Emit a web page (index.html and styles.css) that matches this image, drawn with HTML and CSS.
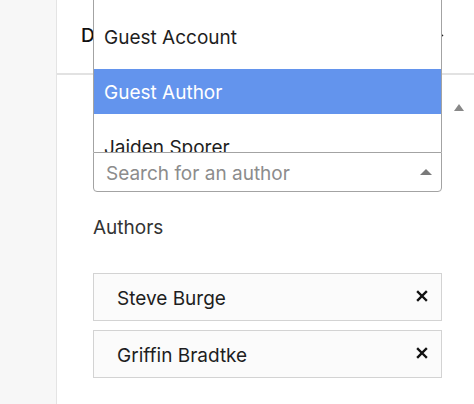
FILE: index.html
```html
<!DOCTYPE html>
<html>
<head>
<meta charset="utf-8">
<link rel="stylesheet" href="styles.css">
</head>
<body>
<div class="app">
  <aside class="sidebar"></aside>
  <main class="main">
    <div class="header">
      <span class="header-title">Document</span>
      <svg class="header-chevron" width="20" height="20" viewBox="0 0 20 20"><path d="M4 12 L10 7 L16 12" fill="none" stroke="#1e1e1e" stroke-width="1.6"/></svg>
    </div>
    <div class="panel">
      <div class="panel-head">
        <span class="toggle-tri"></span>
      </div>
      <div class="combo">
        <div class="menu">
          <ul class="menu-list">
            <li class="menu-item">Guest Account</li>
            <li class="menu-item is-active">Guest Author</li>
            <li class="menu-item">Jaiden Sporer</li>
            <li class="menu-item">Kris Bode</li>
          </ul>
        </div>
        <div class="search">
          <span class="search-placeholder">Search for an author</span>
          <span class="search-tri"></span>
        </div>
      </div>
      <div class="label">Authors</div>
      <div class="author-list">
        <div class="author"><span>Steve Burge</span><svg class="remove" width="12" height="12" viewBox="0 0 12 12"><path d="M2 2 L10 10 M10 2 L2 10" stroke="#111" stroke-width="2.4" stroke-linecap="square"/></svg></div>
        <div class="author"><span>Griffin Bradtke</span><svg class="remove" width="12" height="12" viewBox="0 0 12 12"><path d="M2 2 L10 10 M10 2 L2 10" stroke="#111" stroke-width="2.4" stroke-linecap="square"/></svg></div>
      </div>
    </div>
  </main>
</div>
</body>
</html>
```

FILE: styles.css
```css
* { box-sizing: border-box; }
html, body { margin: 0; padding: 0; }
body {
  font-family: Inter, "Noto Sans", "Liberation Sans", sans-serif;
  background: #fff;
  color: #1e1e1e;
  overflow: hidden;
}
.app {
  display: flex;
  width: 474px;
  height: 404px;
}
.sidebar {
  width: 57px;
  flex: none;
  background: #f7f7f7;
  border-right: 1px solid #e4e4e4;
}
.main {
  flex: 1;
  display: flex;
  flex-direction: column;
}
.header {
  height: 75px;
  border-bottom: 2px solid #e2e2e2;
  display: flex;
  align-items: center;
  padding: 0 27px 0 24px;
  justify-content: space-between;
}
.header-title {
  font-size: 19px;
  font-weight: 500;
  color: #111;
  margin-top: -2px;
}
.header-chevron { margin-top: -6px; }
.panel {
  padding: 0 32px 0 36px;
}
.panel-head {
  height: 65px;
  display: flex;
  align-items: center;
  justify-content: flex-end;
  margin-right: -22px;
}
.toggle-tri {
  width: 0; height: 0;
  border-left: 5px solid transparent;
  border-right: 5px solid transparent;
  border-bottom: 7px solid #888;
}
.combo {
  position: relative;
  margin-top: 12px;
}
.menu {
  position: absolute;
  left: 0; right: 0;
  bottom: 100%;
  height: 170px;
  overflow: hidden;
  background: #fff;
  border-left: 1px solid #a3a3a3;
  border-right: 1px solid #a3a3a3;
}
.menu-list {
  list-style: none;
  margin: 0;
  padding: 32px 0 0;
  display: flex;
  flex-direction: column;
  gap: 10px;
}
.menu-item {
  height: 45px;
  display: flex;
  align-items: center;
  padding: 1px 0 0 10px;
  font-size: 19px;
  color: #1e1e1e;
}
.menu-item.is-active {
  background: #6394ed;
  color: #fff;
}
.search {
  height: 40px;
  border: 1px solid #a3a3a3;
  border-radius: 0 0 4px 4px;
  display: flex;
  align-items: center;
  justify-content: space-between;
  padding: 2px 9px 0 12px;
  background: #fff;
}
.search-placeholder {
  font-size: 19px;
  color: #8c8c8c;
}
.search-tri {
  width: 0; height: 0;
  border-left: 6px solid transparent;
  border-right: 6px solid transparent;
  border-bottom: 6px solid #7a7a7a;
  margin-top: -2px;
}
.label {
  margin-top: 24px;
  font-size: 19px;
  line-height: 24px;
  color: #333;
}
.author-list {
  margin-top: 33px;
  display: flex;
  flex-direction: column;
  gap: 9px;
}
.author {
  height: 48px;
  border: 1px solid #d3d3d3;
  background: #fbfbfb;
  display: flex;
  align-items: center;
  justify-content: space-between;
  padding: 2px 13px 0 23px;
  font-size: 19px;
  color: #1e1e1e;
}
.remove { flex: none; margin-top: -4px; }
```
